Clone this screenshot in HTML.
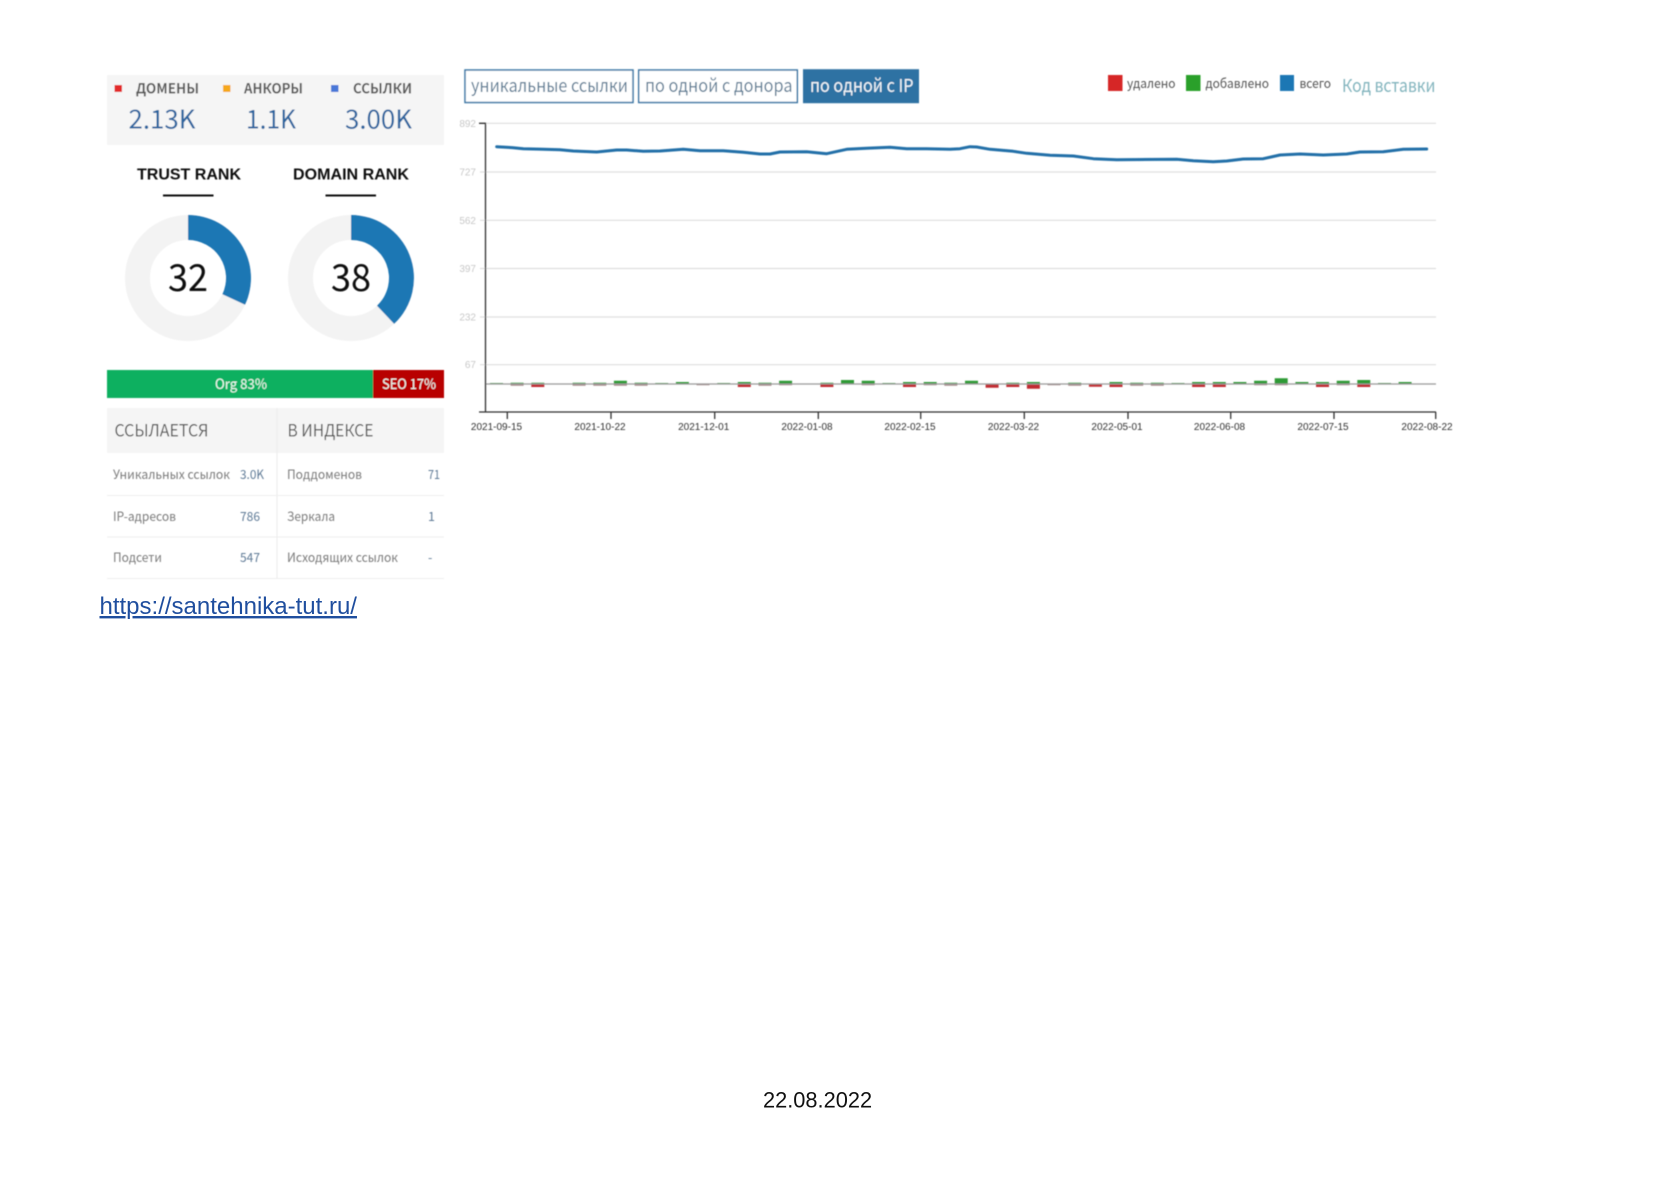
<!DOCTYPE html>
<html lang="ru">
<head>
<meta charset="utf-8">
<title>santehnika-tut.ru</title>
<style>
html,body{margin:0;padding:0;background:#fff;width:1680px;height:1188px;overflow:hidden}
svg{display:block;position:absolute;left:0;top:0}
text{font-family:"Liberation Sans","DejaVu Sans",sans-serif}
.o text,text.o{font-family:"Noto Sans CJK JP","Liberation Sans",sans-serif}
</style>
</head>
<body>
<svg xmlns="http://www.w3.org/2000/svg" width="1680" height="1188" viewBox="0 0 1680 1188">
<defs><filter id="b" x="-2%" y="-2%" width="104%" height="104%"><feGaussianBlur stdDeviation="0.5"/></filter></defs>
<g filter="url(#b)">
<!-- top stats -->
<rect x="107" y="75" width="337" height="70" fill="#f5f5f5"/>
<rect x="114.5" y="85" width="7.5" height="7" fill="#e32b2b"/>
<rect x="223" y="85" width="7.5" height="7" fill="#f5a81c"/>
<rect x="331" y="85" width="7.5" height="7" fill="#4a78d8"/>
<g class="o" font-size="14" font-weight="700" fill="#5a5a5a">
<text x="136" y="93.5" textLength="63" lengthAdjust="spacingAndGlyphs">ДОМЕНЫ</text>
<text x="244" y="93.5" textLength="59" lengthAdjust="spacingAndGlyphs">АНКОРЫ</text>
<text x="353" y="93.5" textLength="59" lengthAdjust="spacingAndGlyphs">ССЫЛКИ</text>
</g>
<g class="o" font-size="26" fill="#2a659f">
<text x="128.5" y="128.5" textLength="67" lengthAdjust="spacingAndGlyphs">2.13K</text>
<text x="246" y="128.5" textLength="50" lengthAdjust="spacingAndGlyphs">1.1K</text>
<text x="345" y="128.5" textLength="67" lengthAdjust="spacingAndGlyphs">3.00K</text>
</g>
<!-- ranks -->
<g font-size="16" font-weight="700" fill="#111">
<text x="137" y="179.5" textLength="104" lengthAdjust="spacingAndGlyphs">TRUST RANK</text>
<text x="293" y="179.5" textLength="116" lengthAdjust="spacingAndGlyphs">DOMAIN RANK</text>
</g>
<rect x="163" y="194.5" width="50.5" height="2" fill="#111"/>
<rect x="325.5" y="194.5" width="50.5" height="2" fill="#111"/>
<circle cx="188" cy="278" r="50.5" fill="none" stroke="#f3f3f3" stroke-width="25"/>
<circle cx="351" cy="278" r="50.5" fill="none" stroke="#f3f3f3" stroke-width="25"/>
<path d="M188 215A63 63 0 0 1 245 304.8L222.4 294.2A38 38 0 0 0 188 240Z" fill="#1f77b4"/>
<path d="M351 215A63 63 0 0 1 394.1 323.9L377 305.7A38 38 0 0 0 351 240Z" fill="#1f77b4"/>
<g class="o" font-size="37" fill="#0a0a0a">
<text x="168" y="291" textLength="40" lengthAdjust="spacingAndGlyphs">32</text>
<text x="331" y="291" textLength="40" lengthAdjust="spacingAndGlyphs">38</text>
</g>
<!-- org seo bar -->
<rect x="107" y="370" width="266" height="28" fill="#08b060"/>
<rect x="373" y="370" width="71" height="28" fill="#b80505"/>
<g class="o" font-size="14" fill="#eefbf3">
<text x="215" y="389" textLength="52" lengthAdjust="spacingAndGlyphs">Org 83%</text>
<text x="382" y="389" textLength="54" lengthAdjust="spacingAndGlyphs">SEO 17%</text>
</g>
<!-- table -->
<rect x="107" y="408" width="337" height="45" fill="#f5f5f5"/>
<rect x="276.5" y="408" width="1" height="170" fill="#ececec"/>
<rect x="107" y="495" width="337" height="1" fill="#eeeeee"/>
<rect x="107" y="536.5" width="337" height="1" fill="#eeeeee"/>
<rect x="107" y="578" width="337" height="1" fill="#eeeeee"/>
<g class="o" font-size="17" fill="#555">
<text x="114.5" y="436.5" textLength="94" lengthAdjust="spacingAndGlyphs">ССЫЛАЕТСЯ</text>
<text x="287.5" y="436.5" textLength="86" lengthAdjust="spacingAndGlyphs">В ИНДЕКСЕ</text>
</g>
<g class="o" font-size="12.5" fill="#7b7b7b">
<text x="113" y="479" textLength="117" lengthAdjust="spacingAndGlyphs">Уникальных ссылок</text>
<text x="113" y="521" textLength="63" lengthAdjust="spacingAndGlyphs">IP-адресов</text>
<text x="113" y="562" textLength="49" lengthAdjust="spacingAndGlyphs">Подсети</text>
<text x="287" y="479" textLength="75" lengthAdjust="spacingAndGlyphs">Поддоменов</text>
<text x="287" y="521" textLength="48" lengthAdjust="spacingAndGlyphs">Зеркала</text>
<text x="287" y="562" textLength="111" lengthAdjust="spacingAndGlyphs">Исходящих ссылок</text>
</g>
<g class="o" font-size="12.5" fill="#5f7a96">
<text x="240" y="479" textLength="24" lengthAdjust="spacingAndGlyphs">3.0K</text>
<text x="240" y="521" textLength="20" lengthAdjust="spacingAndGlyphs">786</text>
<text x="240" y="562" textLength="20" lengthAdjust="spacingAndGlyphs">547</text>
<text x="428" y="479" textLength="12" lengthAdjust="spacingAndGlyphs">71</text>
<text x="428" y="521">1</text>
<text x="428" y="562">-</text>
</g>
<!-- buttons -->
<rect x="465" y="70" width="168" height="32.5" fill="#fff" stroke="#3a77a5" stroke-width="1.5"/>
<rect x="638.7" y="70" width="158.6" height="32.5" fill="#fff" stroke="#3a77a5" stroke-width="1.5"/>
<rect x="803" y="69.2" width="116" height="34" fill="#2f72a3"/>
<g class="o" font-size="18" fill="#5d7d95">
<text x="471" y="92" textLength="157" lengthAdjust="spacingAndGlyphs">уникальные ссылки</text>
<text x="645" y="92" textLength="147.5" lengthAdjust="spacingAndGlyphs">по одной с донора</text>
</g>
<text class="o" x="810" y="92" font-size="18" fill="#f2f6f9" textLength="103.5" lengthAdjust="spacingAndGlyphs">по одной с IP</text>
<!-- legend -->
<rect x="1108" y="75" width="14.5" height="16" fill="#d62728"/>
<rect x="1186" y="75" width="14.5" height="16" fill="#2ca02c"/>
<rect x="1280" y="75" width="14" height="16" fill="#1f77b4"/>
<g class="o" font-size="13" fill="#555">
<text x="1127" y="88" textLength="48.5" lengthAdjust="spacingAndGlyphs">удалено</text>
<text x="1205.5" y="88" textLength="63.5" lengthAdjust="spacingAndGlyphs">добавлено</text>
<text x="1299.5" y="88" textLength="31.5" lengthAdjust="spacingAndGlyphs">всего</text>
</g>
<text class="o" x="1342" y="92" font-size="18" fill="#82b4bd" textLength="93.5" lengthAdjust="spacingAndGlyphs">Код вставки</text>
<!-- grid -->
<g stroke="#dedede" stroke-width="1.2" fill="none">
<path d="M480 123.3H1436M480 172H1436M480 220.3H1436M480 268.5H1436M480 317H1436M480 364.7H1436"/>
</g>
<g font-size="10" fill="#c8c8c8" text-anchor="end">
<text x="476" y="127">892</text>
<text x="476" y="175.5">727</text>
<text x="476" y="224">562</text>
<text x="476" y="272">397</text>
<text x="476" y="320.500">232</text>
<text x="476" y="368.200">67</text>
</g>
<!-- bars -->
<path fill="#2f9a35" d="M490 383h13V384h-13zM510.6 382.7h13V384h-13zM531.3 382.7h13V384h-13zM572.6 382.7h13V384h-13zM593.3 382.7h13V384h-13zM613.9 380.7h13V384h-13zM634.6 382.7h13V384h-13zM655.2 383h13V384h-13zM675.9 382h13V384h-13zM717.2 383h13V384h-13zM737.8 382h13V384h-13zM758.5 382.7h13V384h-13zM779.1 380.7h13V384h-13zM820.4 382.7h13V384h-13zM841 380h13V384h-13zM861.7 380.7h13V384h-13zM882.4 383h13V384h-13zM903 382h13V384h-13zM923.7 382h13V384h-13zM944.3 382.7h13V384h-13zM965 380.7h13V384h-13zM1006.3 382.7h13V384h-13zM1026.9 382h13V384h-13zM1068.2 382.7h13V384h-13zM1109.5 382h13V384h-13zM1130.2 382.7h13V384h-13zM1150.8 382.7h13V384h-13zM1171.5 383h13V384h-13zM1192.1 382h13V384h-13zM1212.8 382h13V384h-13zM1233.4 382h13V384h-13zM1254.1 380.7h13V384h-13zM1274.7 378.3h13V384h-13zM1295.4 382h13V384h-13zM1316 382h13V384h-13zM1336.7 380.7h13V384h-13zM1357.3 380h13V384h-13zM1378 383h13V384h-13zM1398.6 382h13V384h-13z"/>
<path fill="#c12a30" d="M531.3 384h13V387h-13zM737.8 384h13V387h-13zM820.4 384h13V387h-13zM903 384h13V387h-13zM985.6 384h13V387.7h-13zM1006.3 384h13V387h-13zM1026.9 384h13V388.7h-13zM1088.9 384h13V386.7h-13zM1109.5 384h13V387h-13zM1192.1 384h13V387h-13zM1212.8 384h13V387h-13zM1316 384h13V387h-13zM1357.3 384h13V387h-13z"/>
<path fill="#a88a8a" d="M510.6 384h13V385.7h-13zM572.6 384h13V385.7h-13zM593.3 384h13V385.7h-13zM613.9 384h13V385.7h-13zM634.6 384h13V385.7h-13zM696.5 384h13V385.3h-13zM758.5 384h13V385.7h-13zM779.1 384h13V385.3h-13zM861.7 384h13V385.3h-13zM923.7 384h13V385.3h-13zM944.3 384h13V385.7h-13zM1047.5 384h13V385.3h-13zM1068.2 384h13V385.7h-13zM1130.2 384h13V385.7h-13zM1150.8 384h13V385.7h-13zM1254.1 384h13V385.3h-13zM1274.7 384h13V385.3h-13zM1336.7 384h13V385.3h-13z"/>
<path d="M485 384H1436" stroke="#9a9a9a" stroke-width="1.2" fill="none"/>
<!-- line -->
<path fill="none" stroke="#246fa8" stroke-width="3" stroke-linejoin="round" stroke-linecap="round" d="M496.7 146.7L513.3 147.7L523.3 148.7L543.3 149.3L560 149.7L573.3 151L596.7 152L616.7 150L626.7 150L643.3 151.3L660 151L683.3 149.3L700 150.7L723.3 150.7L743.3 152.3L760 154L770 154L780 152L806.7 151.7L826.7 153.7L846.7 149.3L866.7 148.3L890 147.3L906.7 148.7L926.7 148.7L950 149.3L960 148.7L970 146.7L976.7 147L990 149.3L1013.3 151.3L1026.7 153.3L1050 155.3L1073.3 156L1093.3 158.7L1116.7 159.7L1176.7 159.3L1193.3 160.7L1213.3 161.7L1226.7 161L1243.3 159L1263.3 158.7L1280 155L1300 154L1323.3 155L1346.7 154L1360 152L1383.3 151.7L1403.3 149.3L1426.7 149"/>
<!-- axes -->
<path d="M479 123.3H485.5V412H479M485.5 412H1436M507.3 412v7M611 412v7M714.7 412v7M818.3 412v7M920.7 412v7M1024.3 412v7M1128 412v7M1230.7 412v7M1334 412v7M1435.7 412v7" fill="none" stroke="#333" stroke-width="1.3"/>
<g font-size="10" fill="#333" text-anchor="middle">
<text x="496.5" y="430">2021-09-15</text>
<text x="600" y="430">2021-10-22</text>
<text x="703.7" y="430">2021-12-01</text>
<text x="807" y="430">2022-01-08</text>
<text x="910" y="430">2022-02-15</text>
<text x="1013.5" y="430">2022-03-22</text>
<text x="1117" y="430">2022-05-01</text>
<text x="1219.5" y="430">2022-06-08</text>
<text x="1323" y="430">2022-07-15</text>
<text x="1427" y="430">2022-08-22</text>
</g>
</g>
<!-- link + date -->
<text x="99.5" y="614" font-size="24" fill="#1f4e9e" text-decoration="underline">https://santehnika-tut.ru/</text>
<text x="763" y="1107.5" font-size="21.8" fill="#111">22.08.2022</text>
</svg>
</body>
</html>
